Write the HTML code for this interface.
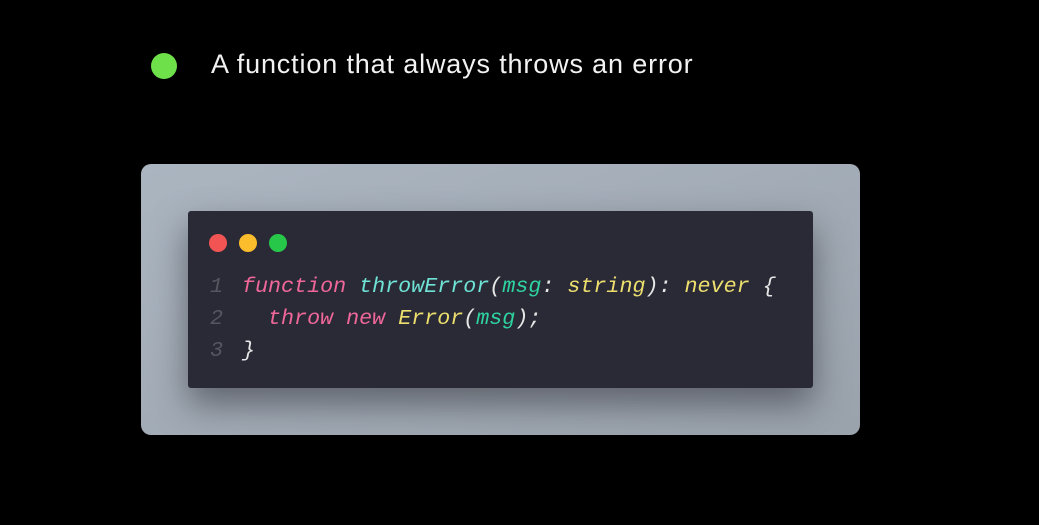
<!DOCTYPE html>
<html><head><meta charset="utf-8"><style>
html,body{margin:0;width:1039px;height:525px;background:#000;overflow:hidden;position:relative;font-family:"Liberation Sans",sans-serif}
.dot{position:absolute;left:151px;top:53px;width:26px;height:26px;border-radius:50%;background:#6ee04a}
.title{position:absolute;left:211px;top:47px;font-size:27px;letter-spacing:0.85px;color:#f2f2f2;line-height:34px}
.outer{position:absolute;left:141px;top:164px;width:719px;height:271px;border-radius:10px;background:linear-gradient(160deg,#abb5c0,#9aa2ac)}
.inner{position:absolute;left:188px;top:211px;width:625px;height:177px;border-radius:3px;background:#2a2a36;box-shadow:0 16px 34px rgba(40,40,50,.55)}
.c{position:absolute;width:18px;height:18px;border-radius:50%;top:23px}
pre{position:absolute;left:22px;top:60px;margin:0;font-family:"Liberation Mono",monospace;font-style:italic;font-size:21.7px;line-height:32px;color:#e6e6e6}
.n{color:#55565f;display:inline-block;width:32px}.k{color:#f0679a}.f{color:#6fe3d6}.p{color:#2ed3a0}.y{color:#eddf6e}
</style></head><body>
<div class="dot"></div><div class="title">A function that always throws an error</div>
<div class="outer"></div>
<div class="inner">
<div class="c" style="left:21px;background:#f25454"></div>
<div class="c" style="left:51px;background:#fbbd2c"></div>
<div class="c" style="left:81px;background:#27c84a"></div>
<pre><span class="n">1</span><span class="k">function</span> <span class="f">throwError</span>(<span class="p">msg</span>: <span class="y">string</span>): <span class="y">never</span> {
<span class="n">2</span>  <span class="k">throw</span> <span class="k">new</span> <span class="y">Error</span>(<span class="p">msg</span>);
<span class="n">3</span>}</pre>
</div>
</body></html>
